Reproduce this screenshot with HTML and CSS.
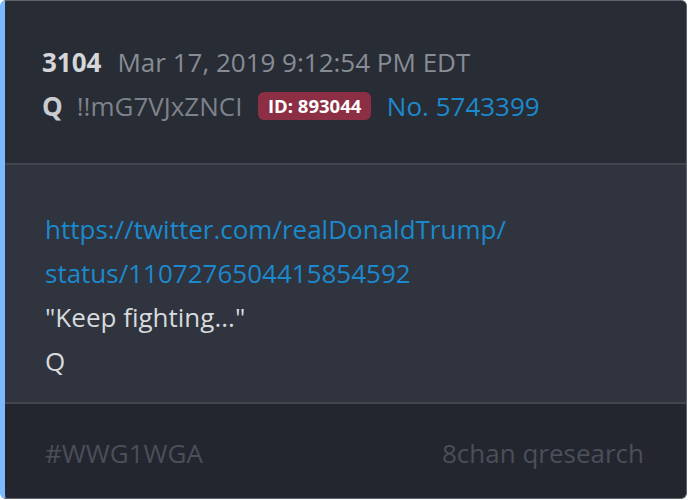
FILE: index.html
```html
<!DOCTYPE html>
<html>
<head>
<meta charset="utf-8">
<link rel="stylesheet" href="styles.css">
</head>
<body>
<div class="card">
  <div class="head">
    <div class="row"><span class="num">3104</span><span class="time">Mar 17, 2019 9:12:54 PM EDT</span></div>
    <div class="row"><span class="name">Q</span><span class="trip">!!mG7VJxZNCI</span><span class="badge">ID: 893044</span><span class="no">No. 5743399</span></div>
  </div>
  <div class="body">
    <a class="link">https://twitter.com/realDonaldTrump/<br>status/1107276504415854592</a>
    <div class="txt">"Keep fighting..."</div>
    <div class="txt">Q</div>
  </div>
  <div class="foot"><span>#WWG1WGA</span><span>8chan qresearch</span></div>
</div>
</body>
</html>
```
FILE: styles.css
```css
html, body { margin: 0; padding: 0; background: #ffffff; }
body { font-family: "Open Sans", "Noto Sans", sans-serif; font-size: 26px; line-height: 44px; }
.card {
  box-sizing: border-box;
  width: 687px;
  height: 499px;
  border: 1.5px solid #5e636c;
  border-left: 5px solid #7cb9ff;
  border-radius: 6px;
  overflow: hidden;
  display: flex;
  flex-direction: column;
  background: #23262e;
}
.head { background: #282c34; padding: 39px 40px 35px 37px; border-bottom: 2px solid #40454f; }
.row { display: flex; align-items: center; gap: 16px; height: 44px; }
.num { font-weight: 700; color: #d4d6da; }
.time { color: #878c96; }
.name { font-weight: 700; color: #c9ccd1; margin-right: -2px; }
.trip { color: #7d828c; }
.badge { background: #8c2f45; color: #ffffff; font-weight: 700; font-size: 18.5px; line-height: 28px; padding: 0 9.5px; border-radius: 6px; }
.no { color: #1c89cd; }
.body { background: #2f343e; padding: 42px 40px 19px 40px; border-bottom: 2px solid #40454f; }
.link { color: #1c89cd; display: block; text-decoration: none; }
.txt { color: #d8dadd; }
.foot { flex: 1; display: flex; justify-content: space-between; padding: 27px 42px 0 40px; color: #4a4f5a; }
```
